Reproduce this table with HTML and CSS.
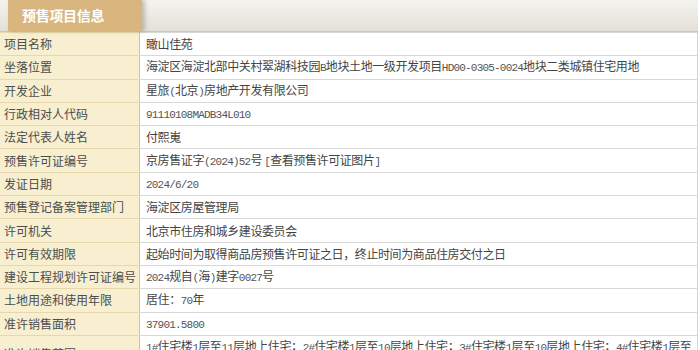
FILE: index.html
```html
<!DOCTYPE html>
<html lang="zh-CN">
<head>
<meta charset="utf-8">
<title>预售项目信息</title>
<link rel="stylesheet" href="styles.css">
</head>
<body>
<div class="panel">
  <div class="tabbar">
    <div class="tab">预售项目信息</div>
  </div>
  <table class="info">
    <tr><th>项目名称</th><td>瞰山佳苑</td></tr>
    <tr><th>坐落位置</th><td>海淀区海淀北部中关村翠湖科技园<span class="a">B</span>地块土地一级开发项目<span class="a">HD00-0305-0024</span>地块二类城镇住宅用地</td></tr>
    <tr><th>开发企业</th><td>星旅<span class="a">(</span>北京<span class="a">)</span>房地产开发有限公司</td></tr>
    <tr><th>行政相对人代码</th><td><span class="a">91110108MADB34L010</span></td></tr>
    <tr><th>法定代表人姓名</th><td>付熙嵬</td></tr>
    <tr><th>预售许可证编号</th><td>京房售证字<span class="a">(2024)52</span>号 <span class="a">[</span>查看预售许可证图片<span class="a">]</span></td></tr>
    <tr><th>发证日期</th><td><span class="a">2024/6/20</span></td></tr>
    <tr><th>预售登记备案管理部门</th><td>海淀区房屋管理局</td></tr>
    <tr><th>许可机关</th><td>北京市住房和城乡建设委员会</td></tr>
    <tr><th>许可有效期限</th><td>起始时间为取得商品房预售许可证之日，终止时间为商品住房交付之日</td></tr>
    <tr><th>建设工程规划许可证编号</th><td><span class="a">2024</span>规自<span class="a">(</span>海<span class="a">)</span>建字<span class="a">0027</span>号</td></tr>
    <tr><th>土地用途和使用年限</th><td>居住：<span class="a">70</span>年</td></tr>
    <tr><th>准许销售面积</th><td><span class="a">37901.5800</span></td></tr>
    <tr class="tall"><th>准许销售范围</th><td><span class="a">1#</span>住宅楼<span class="a">1</span>层至<span class="a">11</span>层地上住宅；<span class="a">2#</span>住宅楼<span class="a">1</span>层至<span class="a">10</span>层地上住宅；<span class="a">3#</span>住宅楼<span class="a">1</span>层至<span class="a">10</span>层地上住宅；<span class="a">4#</span>住宅楼<span class="a">1</span>层至<span class="a">10</span>层地上住宅；<span class="a">5#</span>住宅楼<span class="a">1</span>层至<span class="a">10</span>层地上住宅</td></tr>
  </table>
</div>
</body>
</html>
```

FILE: styles.css
```css
html, body {
  margin: 0;
  padding: 0;
  background: #ffffff;
}

body {
  font-family: "Noto Sans CJK SC", "Noto Sans", sans-serif;
  font-size: 12px;
  color: #444444;
}

.panel {
  width: 698px;
}

.tabbar {
  height: 31px;
  border-bottom: 1px solid #c9c6bc;
  background: linear-gradient(#f4f3ef, #e3e0d8);
  padding-left: 8px;
  display: flex;
  align-items: stretch;
}

.tab {
  width: 134px;
  box-sizing: border-box;
  padding-left: 14px;
  background: #d8b67e;
  color: #ffffff;
  font-weight: bold;
  font-size: 14px;
  line-height: 31px;
  letter-spacing: -0.3px;
  box-shadow: 3px 0 4px rgba(110, 100, 80, 0.35);
}

.info {
  width: 698px;
  border-collapse: collapse;
  table-layout: fixed;
  border-right: 1px solid #d4d4d4;
}

.info th,
.info td {
  height: 22.3px;
  padding: 0 4px;
  text-align: left;
  font-weight: normal;
  line-height: 16px;
  vertical-align: middle;
  white-space: nowrap;
  overflow: hidden;
}

.info th {
  width: 131px;
  background: #f7efcf;
  color: #4d4d4d;
  border-top: 1px solid #e6d7ac;
  border-bottom: 1px solid #e6d7ac;
  border-right: 1px solid #d6c48f;
}

.info td {
  padding-left: 6px;
  color: #444444;
  letter-spacing: -0.4px;
  border-top: 1px solid #d8d8d8;
  border-bottom: 1px solid #d8d8d8;
}

.info .tall th,
.info .tall td {
  height: 40px;
  vertical-align: top;
  padding-top: 2px;
  white-space: normal;
}

.info .tall th {
  padding-top: 10px;
}

.a {
  font-family: "Liberation Mono", "DejaVu Sans Mono", monospace;
  font-size: 11px;
  letter-spacing: -0.8px;
  color: #555555;
}
```
